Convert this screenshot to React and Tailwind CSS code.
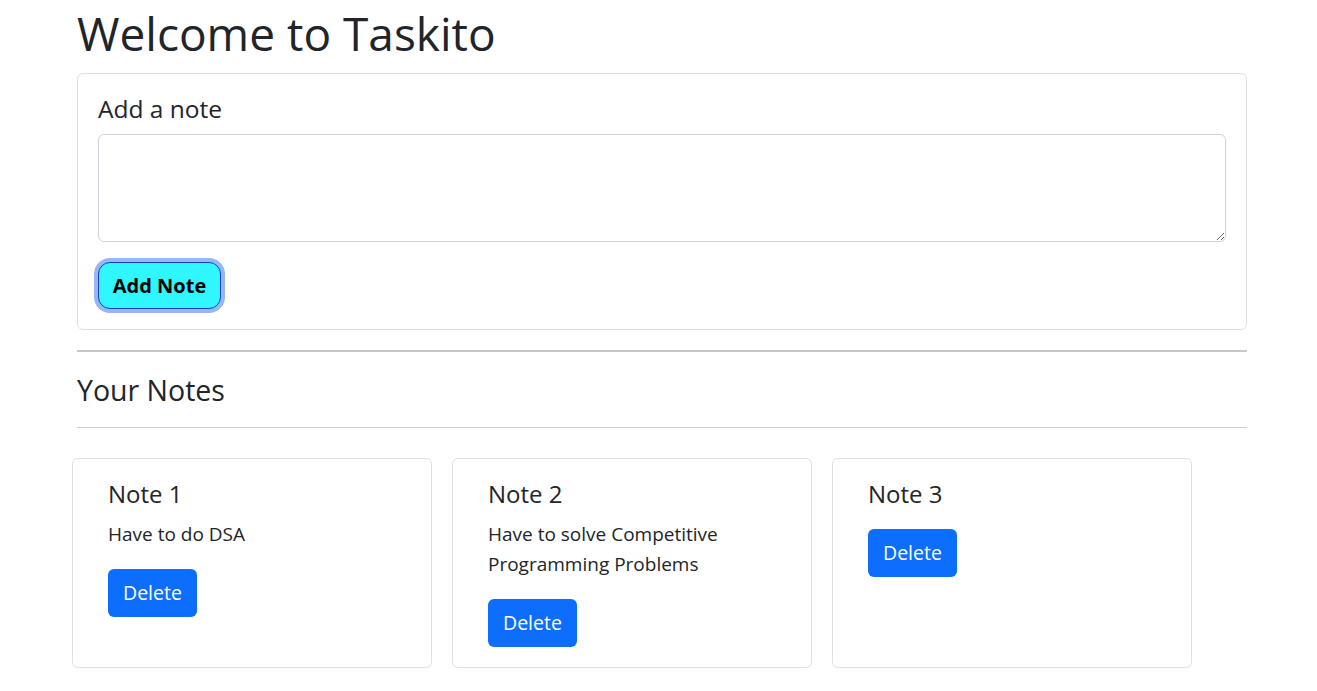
export default function App() {
    const notes = [
        { title: "Note 1", body: "Have to do DSA" },
        { title: "Note 2", body: "Have to solve Competitive Programming Problems" },
        { title: "Note 3", body: "" },
    ]

    return (
        <div className="min-h-screen bg-white font-['Open_Sans',sans-serif] text-[#212529]">
            <div className="ml-[77px] w-[1170px] pt-[3px]">
                <h1 className="mb-[10px] text-[46px] font-medium leading-[60px]">
                    Welcome to Taskito
                </h1>

                {/*Add note card*/}
                <div className="rounded-[6px] border border-[#dfdfdf] p-5">
                    <h5 className="mb-[10px] text-[24.5px] font-medium leading-[30px]">
                        Add a note
                    </h5>
                    <textarea className="block h-[108px] w-full rounded-[6px] border border-[#ced4da] px-3 py-2 text-[20px] outline-none" />
                    <button className="mt-5 h-[47px] w-[123px] rounded-[12px] border border-[#1c3fb8] bg-[#30f6ff] text-[20px] font-bold text-black ring-[4px] ring-[#96b7f5]">
                        Add Note
                    </button>
                </div>

                <hr className="mt-5 border-t-2 border-[#c8c8c8]" />
                <h4 className="mt-[20px] text-[28.5px] font-medium leading-[36px]">
                    Your Notes
                </h4>
                <hr className="mt-[19px] border-t border-[#cfcfcf]" />

                {/*Notes grid*/}
                <div className="-ml-[5px] mt-[30px] flex gap-5">
                    {notes.map((note) => (
                        <div
                            key={note.title}
                            className="w-[360px] rounded-[6px] border border-[#dfdfdf] pb-5 pl-[35px] pr-[35px] pt-5"
                        >
                            <h5 className="mb-[10px] text-[24px] font-medium leading-[30px]">
                                {note.title}
                            </h5>
                            <p className="mb-5 text-[19px] leading-[30px]">
                                {note.body}
                            </p>
                            <button className="h-12 rounded-[6px] bg-[#0d6efd] px-[15px] text-[19.5px] text-white">
                                Delete
                            </button>
                        </div>
                    ))}
                </div>
            </div>
        </div>
    )
}
